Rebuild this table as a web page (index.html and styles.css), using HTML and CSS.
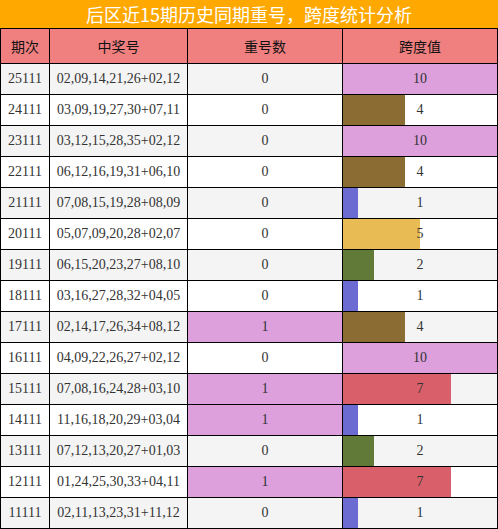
FILE: index.html
```html
<!DOCTYPE html>
<html lang="zh-CN">
<head>
    <meta charset="UTF-8">
    <meta name="viewport" content="width=device-width, initial-scale=1.0">
    <title>后区近15期历史同期重号，跨度统计分析</title>
    <link rel="stylesheet" href="styles.css">
</head>
<body>
    <div class="wrap">
        <div class="title">后区近15期历史同期重号，跨度统计分析</div>
        <table class="stats">
            <thead>
                <tr>
                    <th class="c-issue">期次</th>
                    <th class="c-nums">中奖号</th>
                    <th class="c-rep">重号数</th>
                    <th class="c-span">跨度值</th>
                </tr>
            </thead>
            <tbody>
                <tr><td>25111</td><td>02,09,14,21,26+02,12</td><td>0</td><td class="v10">10</td></tr>
                <tr><td>24111</td><td>03,09,19,27,30+07,11</td><td>0</td><td><div class="span-box"><div class="bar v4" style="width:40%"></div><span>4</span></div></td></tr>
                <tr><td>23111</td><td>03,12,15,28,35+02,12</td><td>0</td><td class="v10">10</td></tr>
                <tr><td>22111</td><td>06,12,16,19,31+06,10</td><td>0</td><td><div class="span-box"><div class="bar v4" style="width:40%"></div><span>4</span></div></td></tr>
                <tr><td>21111</td><td>07,08,15,19,28+08,09</td><td>0</td><td><div class="span-box"><div class="bar v1" style="width:10%"></div><span>1</span></div></td></tr>
                <tr><td>20111</td><td>05,07,09,20,28+02,07</td><td>0</td><td><div class="span-box"><div class="bar v5" style="width:50%"></div><span>5</span></div></td></tr>
                <tr><td>19111</td><td>06,15,20,23,27+08,10</td><td>0</td><td><div class="span-box"><div class="bar v2" style="width:20%"></div><span>2</span></div></td></tr>
                <tr><td>18111</td><td>03,16,27,28,32+04,05</td><td>0</td><td><div class="span-box"><div class="bar v1" style="width:10%"></div><span>1</span></div></td></tr>
                <tr><td>17111</td><td>02,14,17,26,34+08,12</td><td class="hit">1</td><td><div class="span-box"><div class="bar v4" style="width:40%"></div><span>4</span></div></td></tr>
                <tr><td>16111</td><td>04,09,22,26,27+02,12</td><td>0</td><td class="v10">10</td></tr>
                <tr><td>15111</td><td>07,08,16,24,28+03,10</td><td class="hit">1</td><td><div class="span-box"><div class="bar v7" style="width:70%"></div><span>7</span></div></td></tr>
                <tr><td>14111</td><td>11,16,18,20,29+03,04</td><td class="hit">1</td><td><div class="span-box"><div class="bar v1" style="width:10%"></div><span>1</span></div></td></tr>
                <tr><td>13111</td><td>07,12,13,20,27+01,03</td><td>0</td><td><div class="span-box"><div class="bar v2" style="width:20%"></div><span>2</span></div></td></tr>
                <tr><td>12111</td><td>01,24,25,30,33+04,11</td><td class="hit">1</td><td><div class="span-box"><div class="bar v7" style="width:70%"></div><span>7</span></div></td></tr>
                <tr><td>11111</td><td>02,11,13,23,31+11,12</td><td>0</td><td><div class="span-box"><div class="bar v1" style="width:10%"></div><span>1</span></div></td></tr>
            </tbody>
        </table>
    </div>
</body>
</html>
```

FILE: styles.css
```css
body{
    margin: 0;
    background: #fff;
}
.wrap{
    width: 498px;
}
.title{
    height: 28px;
    line-height: 28px;
    background: #ffa800;
    color: #fff;
    text-align: center;
    font-family: "Noto Sans CJK SC", sans-serif;
    font-size: 18px;
}
.stats{
    border-collapse: collapse;
    width: 498px;
    table-layout: fixed;
    font-family: "Liberation Serif", serif;
    font-size: 14px;
    color: #333;
}
.stats th,.stats td{
    border: 1px solid #000;
    padding: 0;
    text-align: center;
}
.stats th{
    height: 34px;
    background: #f08080;
    color: #111;
    font-family: "Noto Sans CJK SC", sans-serif;
    font-size: 14px;
    font-weight: normal;
}
.stats td{
    height: 30px;
}
.c-issue{ width: 48px;}
.c-nums{ width: 137px;}
.c-rep{ width: 154px;}
.c-span{ width: 154px;}

.stats tbody tr:nth-child(odd){ background: #f4f4f4;}
.stats tbody tr:nth-child(even){ background: #fff;}

.hit{ background: #dda0dd;}

.span-box{
    display: grid;
    height: 30px;
    align-items: center;
}
.span-box > *{
    grid-area: 1 / 1;
}
.bar{
    height: 100%;
    justify-self: start;
}
.v10{ background: #dda0dd;}
.v1{ background: #6b6bd2;}
.v2{ background: #627a38;}
.v4{ background: #8b6d33;}
.v5{ background: #e8bb55;}
.v7{ background: #d9606a;}
```
